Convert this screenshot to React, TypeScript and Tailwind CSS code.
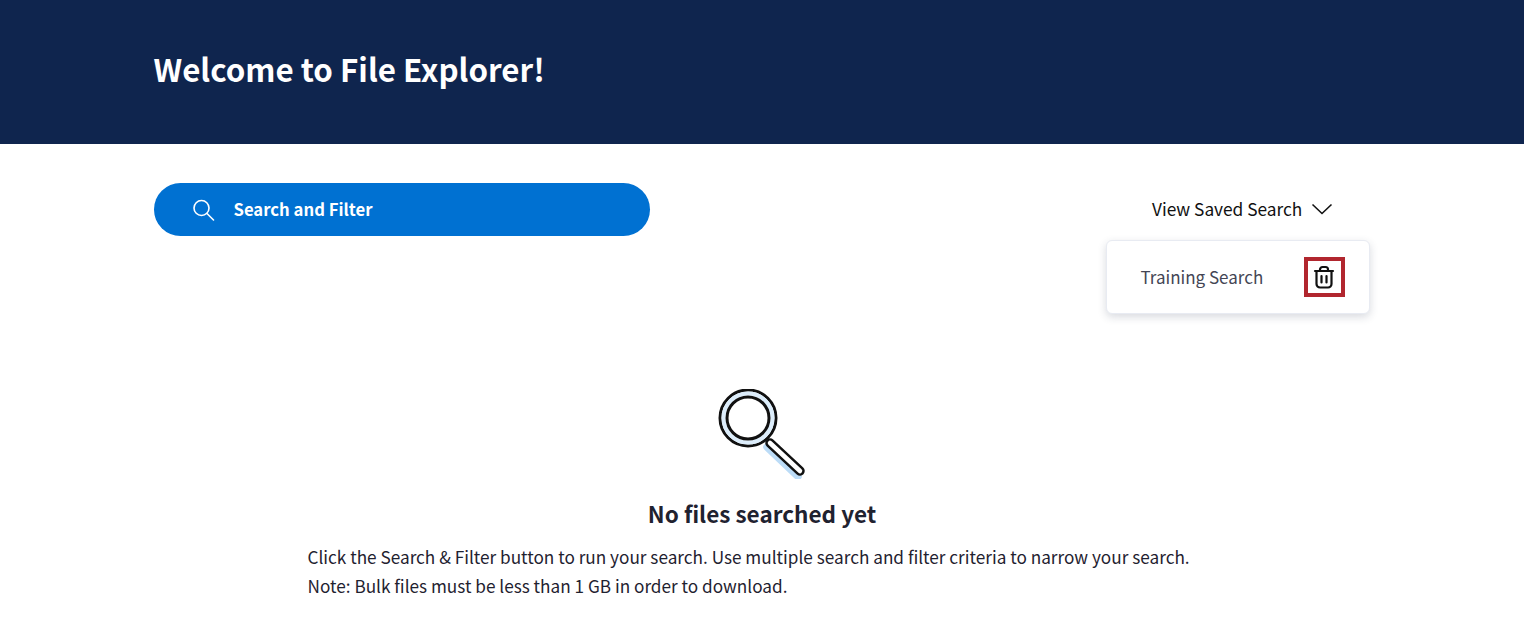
const font = { fontFamily: '"Noto Sans CJK SC", "Noto Sans", sans-serif' }

function SearchIcon() {
  return (
    <svg width="24" height="24" viewBox="0 0 24 24" fill="none" stroke="#fff" strokeWidth="1.6" strokeLinecap="round">
      <circle cx="9.5" cy="10" r="7.5" />
      <path d="M15 15.5 21.5 22" />
    </svg>
  )
}

function TrashIcon() {
  return (
    <svg width="22" height="24" viewBox="0 0 22 24" fill="none" stroke="#111" strokeWidth="2.2" strokeLinecap="round" strokeLinejoin="round">
      <path d="M2 6h18" />
      <path d="M7 6V4.5A2.5 2.5 0 0 1 9.5 2h3A2.5 2.5 0 0 1 15 4.5V6" />
      <path d="M3.5 6v13a3.5 3.5 0 0 0 3.5 3.5h8a3.5 3.5 0 0 0 3.5-3.5V6" />
      <path d="M8.5 11v6.5M13.5 11v6.5" />
    </svg>
  )
}

function MagnifierArt() {
  return (
    <svg width="90" height="90" viewBox="0 0 90 90" fill="none">
      <path d="M50 58 L81 87.5" stroke="#bcdcf7" strokeWidth="7.5" strokeLinecap="round" />
      <path d="M53 54 L83 82" stroke="#111" strokeWidth="9.5" strokeLinecap="round" />
      <path d="M53 54 L83 82" stroke="#fff" strokeWidth="4.5" strokeLinecap="round" />
      <circle cx="31" cy="29" r="28" fill="#fff" stroke="#111" strokeWidth="3" />
      <circle cx="31" cy="29" r="24.5" fill="none" stroke="#dcedfb" strokeWidth="4" />
      <circle cx="31" cy="29" r="21" fill="#fff" stroke="#111" strokeWidth="3" />
    </svg>
  )
}

export default function App() {
  return (
    <div className="w-[1524px] min-h-[629px] bg-white text-[#1f2230]" style={font}>
      <header className="h-[144px] bg-[#0f254e] pl-[153.5px] pt-[44px]">
        <h1 className="text-[31.3px] leading-[50px] font-semibold text-white">Welcome to File Explorer!</h1>
      </header>

      <div className="flex justify-between pl-[153.5px] pr-[154px] pt-[39px]">
        <button className="flex h-[53px] w-[496.5px] items-center gap-[18px] rounded-full bg-[#0071d2] pl-[38px] text-white">
          <SearchIcon />
          <span className="text-[16.7px] font-semibold">Search and Filter</span>
        </button>

        <div className="flex w-[264px] flex-col">
          <button className="flex h-[51px] items-center gap-[9px] pl-[46px] text-[17.3px] text-[#111]">
            View Saved Search
            <svg width="22" height="12" viewBox="0 0 22 12" fill="none" stroke="#111" strokeWidth="1.6">
              <path d="M1.5 1.5 11 10.5 20.5 1.5" />
            </svg>
          </button>
          <div className="mt-[6px] flex h-[74px] items-center justify-between rounded-[6px] border border-[#e8ebf2] bg-white pl-[33.5px] pr-[24.5px] shadow-[0_3px_8px_rgba(40,50,80,0.18)]">
            <span className="text-[17px] text-[#444655]">Training Search</span>
            <span className="flex h-[40px] w-[41px] items-center justify-center border-[4px] border-[#b1262e]">
              <TrashIcon />
            </span>
          </div>
        </div>
      </div>

      <div className="mt-[75px] flex flex-col items-center">
        <MagnifierArt />
        <h2 className="mt-[16px] text-[22.5px] leading-[36px] font-bold text-[#1f2230]">No files searched yet</h2>
        <div className="mt-[11px] w-[909px] text-[17.2px] leading-[29px]">
          <p>Click the Search &amp; Filter button to run your search. Use multiple search and filter criteria to narrow your search.</p>
          <p>Note: Bulk files must be less than 1 GB in order to download.</p>
        </div>
      </div>
    </div>
  )
}
